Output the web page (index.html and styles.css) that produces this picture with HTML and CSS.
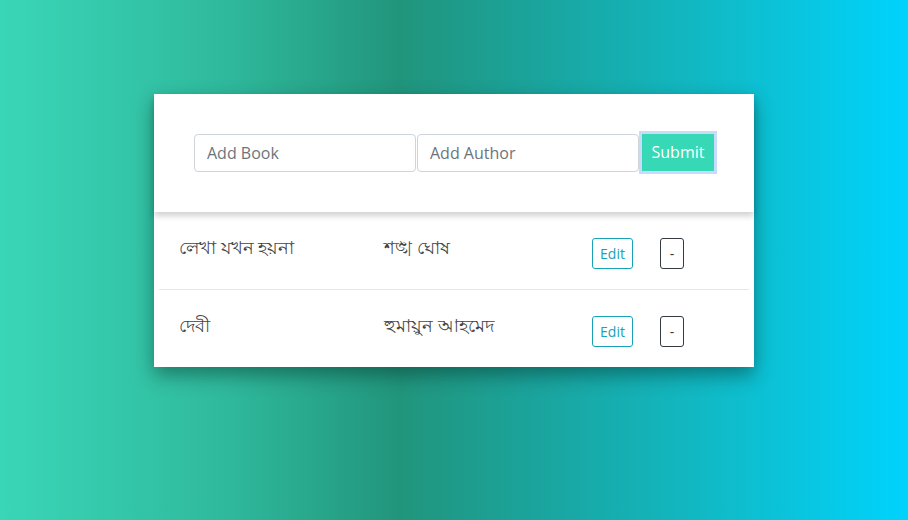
FILE: index.html
```html
<!DOCTYPE html>
<html>
<head>
<meta charset="utf-8">
<link rel="stylesheet" href="styles.css">
</head>
<body>
<div class="page">
  <div class="card">
    <form class="add-form">
      <input class="field" type="text" placeholder="Add Book">
      <input class="field" type="text" placeholder="Add Author">
      <button class="submit" type="button">Submit</button>
    </form>
    <ul class="list">
      <li class="row">
        <span class="book">লেখা যখন হয়না</span>
        <span class="author">শঙ্খ ঘোষ</span>
        <button class="btn-edit" type="button">Edit</button>
        <button class="btn-del" type="button">-</button>
      </li>
      <li class="row">
        <span class="book">দেবী</span>
        <span class="author">হুমায়ুন আহমেদ</span>
        <button class="btn-edit" type="button">Edit</button>
        <button class="btn-del" type="button">-</button>
      </li>
    </ul>
  </div>
</div>
</body>
</html>
```

FILE: styles.css
```css
* { box-sizing: border-box; }
html, body { margin: 0; height: 100%; }
body {
  font-family: "Open Sans", "Noto Sans", sans-serif;
  background: linear-gradient(to right, #3ad6b8 0%, #2fb99c 25%, #21957c 44%, #1aa59f 60%, #0fbcca 80%, #00d3fd 100%);
  color: #444;
}
.page {
  display: flex;
  justify-content: center;
  padding-top: 94px;
}
.card {
  width: 600px;
  background: #fff;
  box-shadow: 0 8px 18px rgba(0, 40, 30, 0.45);
}
.add-form {
  display: flex;
  align-items: center;
  padding: 40px 38px 40px 40px;
  height: 118px;
  box-shadow: 0 4px 6px rgba(0, 0, 0, 0.18);
  position: relative;
}
.field {
  width: 222px;
  height: 38px;
  border: 1px solid #ced4da;
  border-radius: 4px;
  padding: 0 12px;
  font-family: inherit;
  font-size: 16px;
  color: #495057;
  margin-right: 1px;
}
.field::placeholder { color: #6c757d; }
.submit {
  height: 37px;
  width: 72px;
  margin-left: 2px;
  margin-top: -2px;
  background: #36d8b6;
  color: #fff;
  border: none;
  border-radius: 0;
  font-family: inherit;
  font-size: 16px;
  box-shadow: 0 0 0 3px #c6dcf9;
}
.list {
  list-style: none;
  margin: 0;
  padding: 0 5px;
}
.row {
  display: flex;
  align-items: center;
  height: 78px;
  padding-left: 20px;
  border-bottom: 1px solid #e6e6e6;
}
.row:last-child { border-bottom: none; height: 77px; }
.book, .author {
  font-size: 18px;
  color: #444;
  margin-top: -2px;
}
.book { width: 205px; }
.author { width: 208px; }
.btn-edit, .btn-del {
  height: 31px;
  margin-top: 6px;
  background: #fff;
  border-radius: 3px;
  font-family: inherit;
  font-size: 14px;
  padding: 0;
}
.btn-edit {
  width: 41px;
  border: 1px solid #17a2b8;
  color: #17a2b8;
}
.btn-del {
  width: 24px;
  margin-left: 27px;
  border: 1px solid #343a40;
  color: #343a40;
}
```
